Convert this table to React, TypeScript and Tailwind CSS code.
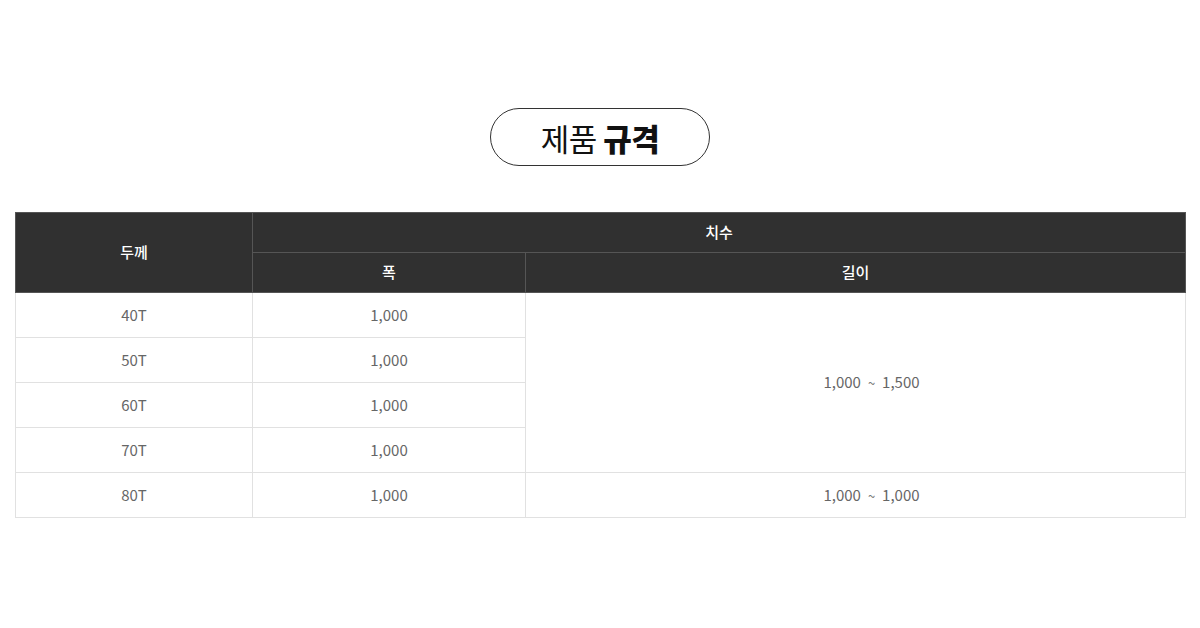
import React from "react";

const font = { fontFamily: '"Noto Sans CJK KR", "Noto Sans", sans-serif' };

function Range({ a, b }: { a: string; b: string }) {
  return (
    <span className="inline-flex items-baseline pl-[32px]">
      <span>{a}</span>
      <span className="mx-[7px] text-[13px] text-[#777777]">~</span>
      <span>{b}</span>
    </span>
  );
}

export default function App() {
  const rows = ["40T", "50T", "60T", "70T"];
  const th = "border border-[#555555] bg-[#303030] text-white text-[15px] font-medium text-center p-0";
  const td = "border border-[#e1e1e1] text-[#666666] text-[15px] text-center p-0 h-[45px]";
  return (
    <div className="w-[1200px] h-[628px] bg-white pt-[108px]" style={font}>
      <div className="flex justify-center">
        <div className="w-[220px] h-[58px] rounded-full border border-[#333333] flex items-center justify-center text-[31px] text-[#111111] leading-none tracking-[-0.5px]">
          <span>제품&nbsp;</span>
          <span className="font-black">규격</span>
        </div>
      </div>
      <div className="px-[15px] mt-[46px]">
        <table className="w-[1170px] border-collapse table-fixed">
          <colgroup>
            <col className="w-[237px]" />
            <col className="w-[273px]" />
            <col className="w-[660px]" />
          </colgroup>
          <thead>
            <tr className="h-[40px]">
              <th rowSpan={2} className={th}>두께</th>
              <th colSpan={2} className={th}>치수</th>
            </tr>
            <tr className="h-[40px]">
              <th className={th}>폭</th>
              <th className={th}>길이</th>
            </tr>
          </thead>
          <tbody>
            {rows.map((r, i) => (
              <tr key={r}>
                <td className={td}>{r}</td>
                <td className={td}>1,000</td>
                {i === 0 && (
                  <td rowSpan={4} className={td}>
                    <Range a="1,000" b="1,500" />
                  </td>
                )}
              </tr>
            ))}
            <tr>
              <td className={td}>80T</td>
              <td className={td}>1,000</td>
              <td className={td}>
                <Range a="1,000" b="1,000" />
              </td>
            </tr>
          </tbody>
        </table>
      </div>
    </div>
  );
}
